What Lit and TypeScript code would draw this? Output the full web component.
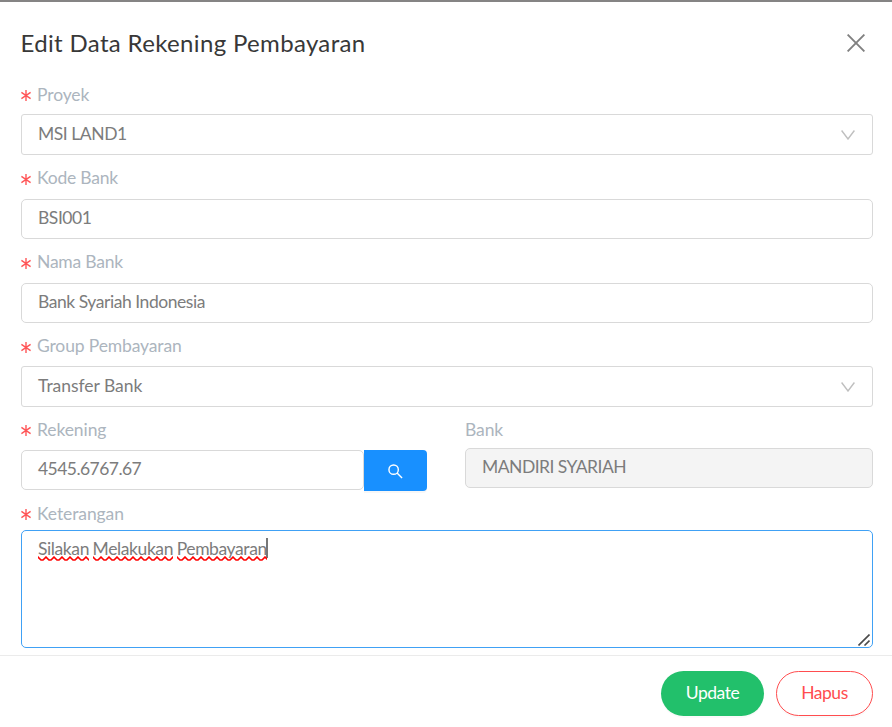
import { LitElement, html, css, svg, nothing } from "lit";
import { customElement, property } from "lit/decorators.js";

@customElement("form-field")
class FormField extends LitElement {
  @property() label = "";
  @property({ type: Boolean }) required = false;

  static styles = css`
    :host { display: flex; flex-direction: column; min-width: 0; }
    .label {
      display: flex;
      align-items: center;
      height: 24px;
      line-height: 24px;
      margin-bottom: var(--gap, 8px);
      color: #acb5be;
      letter-spacing: var(--track, -0.1px);
      white-space: nowrap;
    }
    .star { width: 10px; height: 11px; margin: var(--star, 1px) 6px 0 0; flex: none; }
    .star path { stroke: #ff5557; stroke-width: 1.4; fill: none; }
  `;

  render() {
    return html`
      <div class="label">
        ${this.required
          ? svg`<svg class="star" viewBox="0 0 10 11"><path d="M5 0V11M.4 2.4L9.6 8.6M9.6 2.4L.4 8.6"/></svg>`
          : nothing}
        <span>${this.label}</span>
      </div>
      <slot></slot>
    `;
  }
}

@customElement("app-root")
class AppRoot extends LitElement {
  static styles = css`
    :host {
      display: flex;
      flex-direction: column;
      box-sizing: border-box;
      height: 727px;
      border-top: 2px solid #858484;
      background: #fff;
      overflow: hidden;
      font-family: Lato, "Open Sans", sans-serif;
      font-size: 17.5px;
      color: #7c7c7c;
    }
    * { box-sizing: border-box; }
    header {
      display: flex;
      justify-content: space-between;
      align-items: center;
      height: 81px;
      padding: 1px 27px 0 20.5px;
    }
    h1 { margin: 0; font-size: 24px; font-weight: 400; line-height: 32px; letter-spacing: 0.34px; color: #383838; }
    .close { width: 18px; height: 18px; stroke: #808080; stroke-width: 1.9; fill: none; }
    main { display: flex; flex-direction: column; padding: 0 19px 0 21px; }
    form-field { height: 84px; }
    .project { --gap: 7px; height: 83px; }
    .bank-name { --gap: 9px; --track: -0.22px; --star: 3px; }
    .group { --star: 3px; --track: -0.14px; }
    .control {
      display: flex;
      align-items: center;
      justify-content: space-between;
      height: 40px;
      padding: 0 17px 3px 16px;
      border: 1px solid #d9d9d9;
      border-radius: 5px;
      letter-spacing: -0.45px;
      white-space: nowrap;
    }
    .select { height: 41px; padding-bottom: 2px; border-radius: 3px; }
    .normal { letter-spacing: -0.03px; }
    .chevron { width: 14px; height: 10px; margin-top: 3px; stroke: #bfbfbf; stroke-width: 1.4; fill: none; }
    .pair { display: grid; grid-template-columns: 406px 408px; column-gap: 38px; }
    .search { display: flex; }
    .search .control { flex: 1; letter-spacing: -0.55px; }
    .search button {
      display: flex; align-items: center; justify-content: center;
      width: 63px; height: 41px; padding: 0 1px 0 0; border: 0;
      border-radius: 0 4px 4px 0; background: #1890ff;
      box-shadow: 0 2px 0 rgba(0, 0, 0, 0.03);
    }
    .glass { width: 15px; height: 15px; margin-top: 2px; stroke: #fff; stroke-width: 1.5; fill: none; }
    .disabled { background: #f4f4f4; letter-spacing: -0.52px; }
    .bank { --gap: 6px; --track: -0.1px; }
    .note { --gap: 4px; height: 146px; }
    .area {
      position: relative; height: 118px; padding: 7px 16px;
      border: 1px solid #40a1f5; border-radius: 5px; line-height: 22px; letter-spacing: -0.4px;
    }
    .line { display: flex; gap: 3.6px; }
    .word { position: relative; height: 24px; }
    .wave { position: absolute; left: 0; top: 18px; width: 100%; height: 5px; }
    .wave path { fill: none; stroke: #f00; stroke-width: 1.6; }
    .caret { width: 2px; height: 20px; margin-left: -4.2px; background: #777; }
    .grip { position: absolute; right: 2px; bottom: 1px; width: 12px; height: 12px; stroke: #4a4a4a; stroke-width: 1.6; fill: none; }
    footer {
      display: flex; justify-content: flex-end; gap: 12px;
      margin-top: auto; height: 72px; padding: 15px 19px 0;
      border-top: 1px solid #ebebeb;
    }
    footer button {
      height: 45px; padding: 0 0 2px; border-radius: 23px;
      font: inherit; letter-spacing: -0.5px; box-shadow: 0 2px 0 rgba(0, 0, 0, 0.02);
    }
    .update { width: 103px; border: 0; background: #22c06b; color: #fff; }
    .delete { width: 97px; border: 1px solid #ff4d4f; background: #fff; color: #ff4d4f; }
  `;

  private chevron() {
    return svg`<svg class="chevron" viewBox="0 0 14 10"><path d="M.6 .5L7 9L13.4 .5"/></svg>`;
  }

  private word(text: string, index: number) {
    return html`<span class="word">${text}<svg class="wave">
      <defs><pattern id="w${index}" width="8" height="5" patternUnits="userSpaceOnUse">
        <path d="M-1 0L0 1L3 4H5L8 1L9 0"/>
      </pattern></defs>
      <rect width="100%" height="5" fill="url(#w${index})"/></svg></span>`;
  }

  render() {
    return html`
      <header>
        <h1>Edit Data Rekening Pembayaran</h1>
        <svg class="close" viewBox="0 0 18 18"><path d="M.6 .6L17.4 17.4M17.4 .6L.6 17.4"/></svg>
      </header>
      <main>
        <form-field class="project" label="Proyek" required>
          <div class="control select"><span>MSI LAND1</span>${this.chevron()}</div>
        </form-field>
        <form-field class="bank-name" label="Kode Bank" required>
          <div class="control">BSI001</div>
        </form-field>
        <form-field class="bank-name" label="Nama Bank" required>
          <div class="control">Bank Syariah Indonesia</div>
        </form-field>
        <form-field class="group" label="Group Pembayaran" required>
          <div class="control select normal"><span>Transfer Bank</span>${this.chevron()}</div>
        </form-field>
        <div class="pair">
          <form-field label="Rekening" required>
            <div class="search">
              <div class="control">4545.6767.67</div>
              <button aria-label="Cari"><svg class="glass" viewBox="0 0 16 16"><circle cx="6" cy="6" r="5"/><path d="M9.7 9.7L15 15"/></svg></button>
            </div>
          </form-field>
          <form-field class="bank" label="Bank">
            <div class="control disabled">MANDIRI SYARIAH</div>
          </form-field>
        </div>
        <form-field class="note" label="Keterangan" required>
          <div class="area">
            <div class="line">${["Silakan", "Melakukan", "Pembayaran"].map((w, i) => this.word(w, i))}<span class="caret"></span></div>
            <svg class="grip" viewBox="0 0 12 12"><path d="M.5 11.5L11.5 .5M6.5 11.5L11.5 6.5"/></svg>
          </div>
        </form-field>
      </main>
      <footer>
        <button class="update">Update</button>
        <button class="delete">Hapus</button>
      </footer>
    `;
  }
}
